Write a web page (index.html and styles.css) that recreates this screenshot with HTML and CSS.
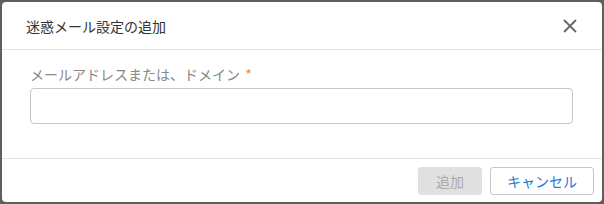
FILE: index.html
```html
<!DOCTYPE html>
<html lang="ja">
<head>
    <meta charset="UTF-8">
    <title>迷惑メール設定の追加</title>
    <link rel="stylesheet" href="styles.css">
</head>
<body>
    <div class="dialog">
        <div class="dialog-header">
            <h1>迷惑メール設定の追加</h1>
            <button class="close" aria-label="閉じる">
                <svg width="14" height="14" viewBox="0 0 14 14">
                    <path d="M1 1L13 13M13 1L1 13" stroke="#666" stroke-width="1.8" fill="none"/>
                </svg>
            </button>
        </div>
        <div class="dialog-body">
            <label for="address">メールアドレスまたは、ドメイン <span class="req">*</span></label>
            <input type="text" id="address">
        </div>
        <div class="dialog-footer">
            <button class="btn btn-add" disabled>追加</button>
            <button class="btn btn-cancel">キャンセル</button>
        </div>
    </div>
</body>
</html>
```

FILE: styles.css
```css
body {
    margin: 0;
    padding: 2px;
    background-color: #5f5f5f;
    font-family: "Noto Sans CJK JP", "Noto Sans", sans-serif;
    font-size: 14px;
}
.dialog {
    width: 600px;
    height: 200px;
    background-color: #fff;
    border-radius: 4px;
    display: flex;
    flex-direction: column;
}
.dialog-header {
    height: 47px;
    border-bottom: 1px solid #e2e2e2;
    display: flex;
    align-items: center;
    justify-content: space-between;
    padding: 0 24px;
}
.dialog-header h1 {
    margin: 0;
    font-size: 14px;
    font-weight: normal;
    color: #333;
}
.close {
    border: none;
    background: none;
    padding: 0;
    margin-right: 1px;
    display: flex;
    cursor: pointer;
}
.dialog-body {
    flex-grow: 1;
    padding: 14px 28px 0 28px;
    display: flex;
    flex-direction: column;
}
.dialog-body label {
    color: #888;
    font-size: 14px;
    line-height: 20px;
    margin-bottom: 4px;
}
.req {
    color: #f08a24;
    margin-left: 2px;
}
.dialog-body input {
    border: 1px solid #c6c6c6;
    border-radius: 4px;
    padding: 0 8px;
    box-sizing: border-box;
    height: 36px;
    width: 543px;
    outline: none;
}
.dialog-footer {
    border-top: 1px solid #e2e2e2;
    height: 44px;
    display: flex;
    justify-content: flex-end;
    align-items: flex-start;
    padding: 8px 8px 0 0;
    box-sizing: border-box;
    gap: 8px;
}
.btn {
    height: 28px;
    font-family: inherit;
    font-size: 14px;
    border-radius: 3px;
    padding: 0;
}
.btn-add {
    width: 64px;
    background-color: #e0e0e0;
    color: #aaa;
    border: 1px solid #e0e0e0;
}
.btn-cancel {
    width: 104px;
    background-color: #fff;
    color: #1a7ad4;
    border: 1px solid #c6c6c6;
    cursor: pointer;
}
```
